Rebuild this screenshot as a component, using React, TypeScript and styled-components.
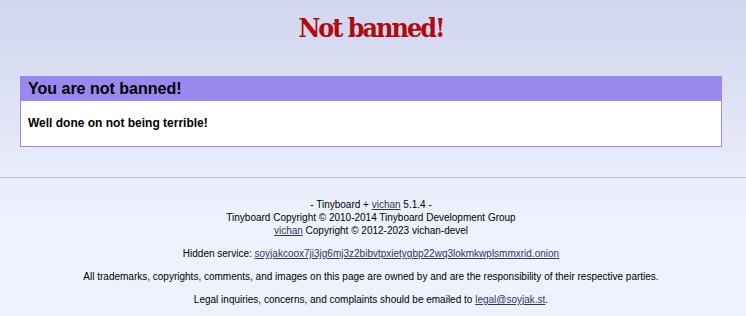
import React from "react";
import styled, { createGlobalStyle } from "styled-components";

const Global = createGlobalStyle`
  html, body { margin: 0; padding: 0; }
  body {
    background: #eef2ff linear-gradient(#d1d5ee 0px, #dde1f4 90px, #eef2ff 220px) repeat-x;
    min-height: 316px;
    color: #000;
    font-family: "Liberation Sans", Arial, sans-serif;
    font-size: 10pt;
  }
  a { color: #34345c; }
`;

const Page = styled.div`
  display: flex;
  flex-direction: column;
  min-height: 316px;
`;

const Main = styled.main`
  display: flex;
  flex-direction: column;
  align-items: center;
  padding: 10px 4px 0 0;
`;

const Title = styled.h1`
  margin: 0;
  font-family: "DejaVu Serif Condensed", "DejaVu Serif", serif;
  font-stretch: condensed;
  font-weight: bold;
  font-size: 20pt;
  letter-spacing: -2px;
  color: #af0a0f;
  line-height: 36px;
`;

const BanBox = styled.div`
  width: 700px;
  margin-top: 30px;
  background: #fff;
  border: 1px solid #9988ee;
`;

const BanTitle = styled.h2`
  margin: 0;
  padding: 3px 7px;
  background: #9988ee;
  color: #000;
  font-size: 12pt;
  line-height: 18px;
`;

const BanText = styled.p`
  margin: 0;
  padding: 15px 7px 15px;
  font-size: 12px;
  font-weight: bold;
  line-height: 15px;
`;

const Rule = styled.hr`
  margin: 30px 0 0;
  border: none;
  border-top: 1px solid #b7c5d9;
  height: 0;
`;

const Footer = styled.footer`
  display: flex;
  flex-direction: column;
  align-items: center;
  padding: 20px 4px 0 0;
`;

const FooterLine = styled.p<{ $gap?: number }>`
  margin: ${(p) => p.$gap ?? 0}px 0 0;
  font-size: 10px;
  line-height: 13px;
  text-align: center;
`;

export default function App() {
  return (
    <Page>
      <Global />
      <Main>
        <Title>Not banned!</Title>
        <BanBox>
          <BanTitle>You are not banned!</BanTitle>
          <BanText>Well done on not being terrible!</BanText>
        </BanBox>
      </Main>
      <Rule />
      <Footer>
        <FooterLine>
          - Tinyboard + <a href="#">vichan</a> 5.1.4 -<br />
          Tinyboard Copyright © 2010-2014 Tinyboard Development Group<br />
          <a href="#">vichan</a> Copyright © 2012-2023 vichan-devel
        </FooterLine>
        <FooterLine $gap={10}>
          Hidden service:{" "}
          <a href="#">soyjakcoox7ji3jg6mj3z2bibvtpxietygbp22wq3lokmkwplsmmxrid.onion</a>
        </FooterLine>
        <FooterLine $gap={10}>
          All trademarks, copyrights, comments, and images on this page are owned by and are the responsibility of their respective parties.
        </FooterLine>
        <FooterLine $gap={10}>
          Legal inquiries, concerns, and complaints should be emailed to{" "}
          <a href="#">legal@soyjak.st</a>.
        </FooterLine>
      </Footer>
    </Page>
  );
}
